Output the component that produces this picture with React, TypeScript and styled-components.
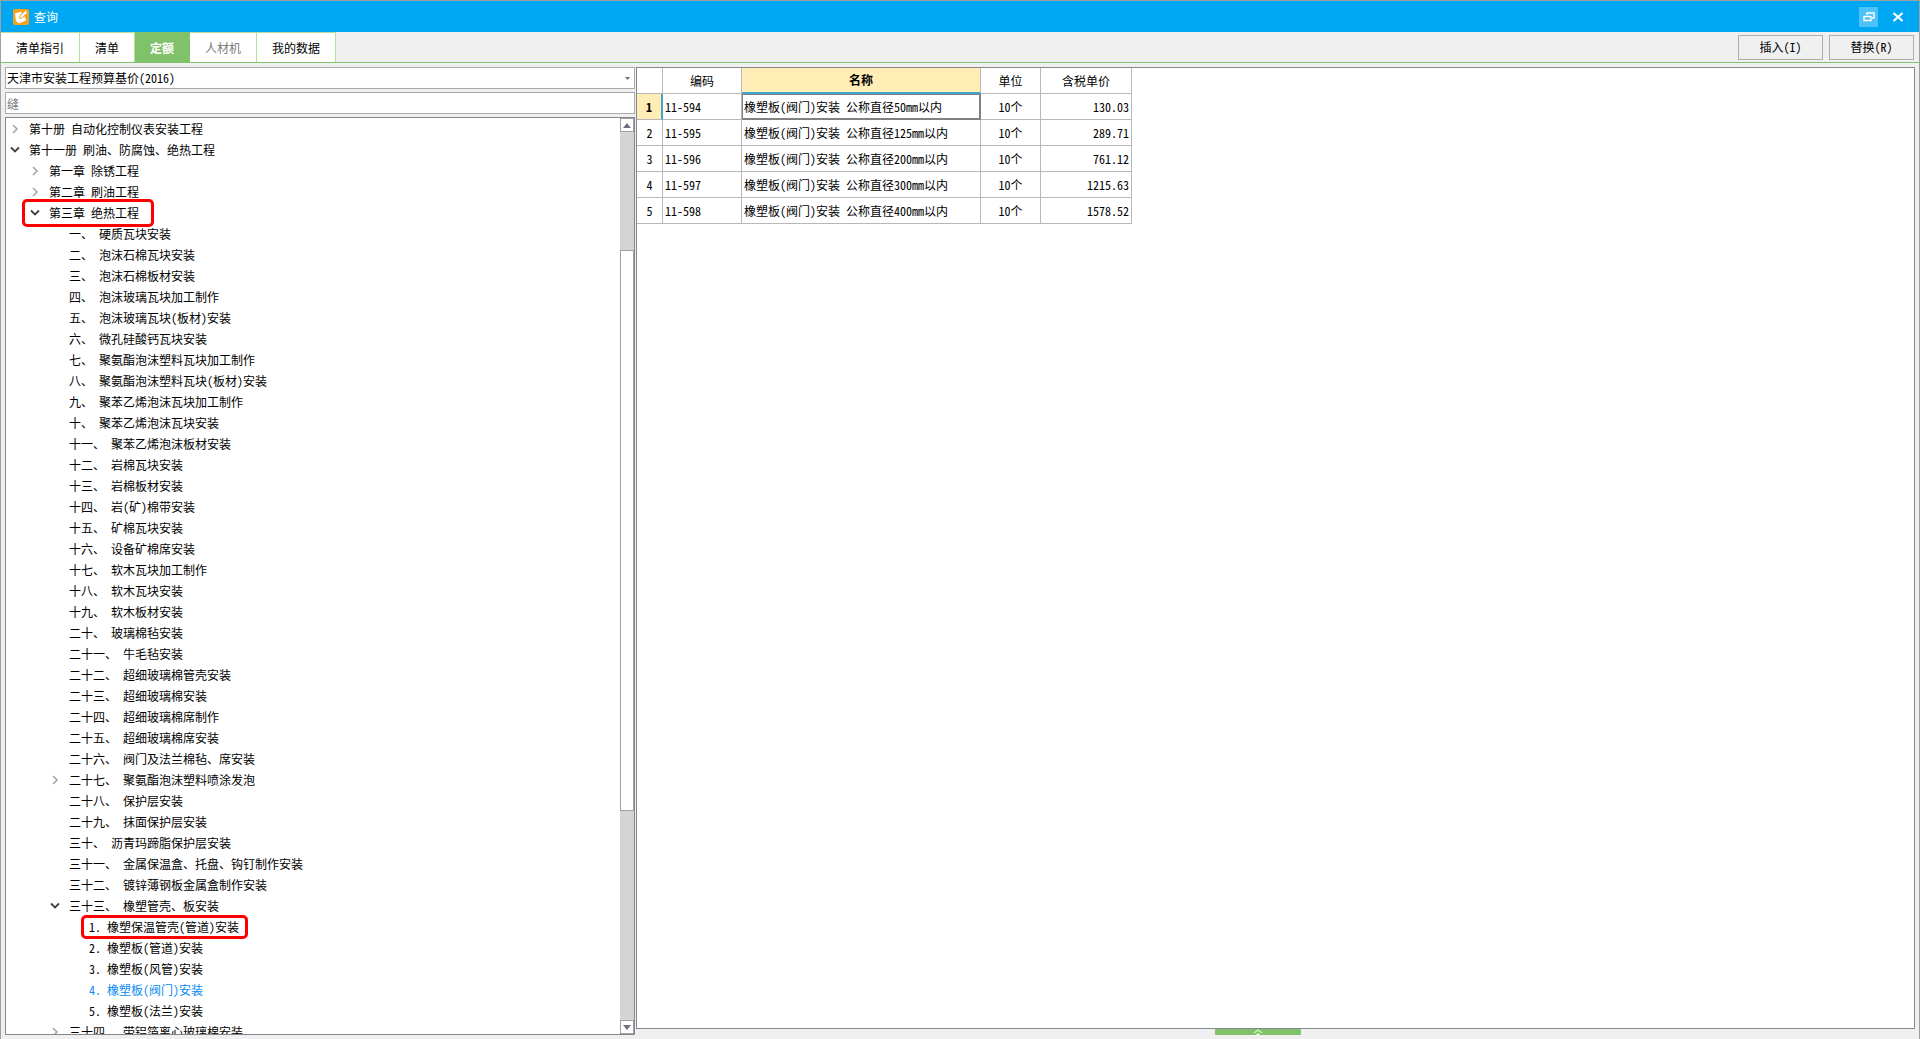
import React, { useState } from "react";
import styled, { createGlobalStyle, css } from "styled-components";

const GlobalStyle = createGlobalStyle`
  *, *::before, *::after { box-sizing: border-box; }
  html, body, #root { height: 100%; }
  body { margin: 0; background: #f0f0f0; }
  body, button, input, select {
    font-family: "Noto Sans CJK SC", "Noto Sans", sans-serif;
    font-size: 12px;
    font-feature-settings: "hwid";
    color: #000;
  }
  button { padding: 0; border: 0; background: none; white-space: nowrap; }
`;

const Window = styled.div`
  display: flex;
  flex-direction: column;
  height: 100vh;
  border: 1px solid #a0a0a0;
  border-bottom: 0;
  background: #f0f0f0;
`;

const TitleBar = styled.header`
  flex: none;
  display: flex;
  align-items: center;
  gap: 5px;
  height: 31px;
  padding: 0 12px;
  background: #00a8f3;
  color: #fff;
`;

const Title = styled.h1`
  flex: 1;
  margin: 0;
  font-size: 12px;
  font-weight: 400;
  line-height: 16px;
`;

const WindowButton = styled.button<{ $lit?: boolean }>`
  display: grid;
  place-items: center;
  width: 19px;
  height: 20px;
  margin-left: 5px;
  background: ${(p) => (p.$lit ? "#4cc2f8" : "none")};
`;

const TabBar = styled.div`
  flex: none;
  display: flex;
  height: 31px;
  border-bottom: 1px solid #80c269;
`;

const Tabs = styled.nav`
  flex: 1;
  display: flex;
`;

const Tab = styled.button<{ $active?: boolean; $muted?: boolean }>`
  padding: 0 15px;
  border-top: 1px solid #b4e09f;
  border-right: 1px solid #b4e09f;
  background: #fff;
  line-height: 28px;
  color: ${(p) => (p.$muted ? "#7a7a7a" : "#000")};
  ${(p) =>
    p.$active &&
    css`
      border-color: #80c269;
      background: #80c269;
      color: #fff;
      font-weight: 700;
    `}
`;

const Actions = styled.div`
  display: flex;
  align-items: center;
  gap: 6px;
  padding: 0 5px;
`;

const ActionButton = styled.button`
  width: 85px;
  height: 25px;
  border: 1px solid #adadad;
  line-height: 22px;
`;

const Body = styled.main`
  flex: 1;
  display: grid;
  grid-template-columns: minmax(0, 630fr) minmax(0, 1279fr);
  gap: 1px;
  min-height: 0;
  padding: 4px 4px 4px 4px;
`;

const Side = styled.section`
  display: flex;
  flex-direction: column;
  gap: 3px;
  min-height: 0;
`;

const Picker = styled.div`
  flex: none;
  display: grid;
  height: 22px;
  border: 1px solid #ababab;
  background: #fff;
  > * { grid-area: 1 / 1; }
  > svg { place-self: center end; margin-right: 4px; pointer-events: none; }
`;

const Library = styled.select`
  width: 100%;
  padding: 0 1px;
  border: 0;
  background: none;
  appearance: none;
  line-height: 18px;
`;

const Search = styled.input`
  flex: none;
  height: 22px;
  padding: 0 1px;
  border: 1px solid #ababab;
  background: #fff;
  &::placeholder { color: #7f7f7f; opacity: 1; }
`;

const TreeFrame = styled.div`
  flex: 1;
  display: flex;
  min-height: 0;
  border: 1px solid #828790;
  background: #fff;
`;

const Tree = styled.ul`
  flex: 1;
  margin: 0;
  padding: 0;
  overflow: hidden;
  list-style: none;
`;

const Node = styled.li<{ $depth: number }>`
  display: flex;
  align-items: center;
  height: 21px;
  padding-left: ${(p) => p.$depth * 20}px;
`;

const Toggle = styled.button`
  flex: none;
  display: grid;
  place-items: center;
  width: 18px;
  height: 20px;
`;

const Spacer = styled.span`
  flex: none;
  width: 18px;
`;

const Label = styled.button<{ $selected: boolean; $mark?: "chapter" | "item" }>`
  position: relative;
  margin-left: 5px;
  line-height: 20px;
  white-space: pre;
  color: ${(p) => (p.$selected ? "#0a8cf5" : "#000")};
  ${(p) =>
    p.$mark &&
    css`
      &::after {
        content: "";
        position: absolute;
        inset: ${p.$mark === "chapter" ? "-4px -15px -4px -27px" : "-2px -9px -2px -8px"};
        border: 3px solid #f00;
        border-radius: 5px;
        pointer-events: none;
      }
    `}
`;

const ScrollBar = styled.div`
  flex: none;
  display: flex;
  flex-direction: column;
  width: 14px;
  background: #d4d4d4;
`;

const ScrollButton = styled.button`
  flex: none;
  display: grid;
  place-items: center;
  height: 14px;
  border: 1px solid #a0a0a0;
  background: #fff;
`;

const Track = styled.div<{ $share: number }>`
  flex: ${(p) => p.$share} 1 0;
`;

const Thumb = styled(Track)`
  border: 1px solid #a0a0a0;
  background: #fff;
`;

const Main = styled.section`
  display: flex;
  flex-direction: column;
  min-height: 0;
`;

const Sheet = styled.div`
  flex: 1;
  min-height: 0;
  overflow: hidden;
  border: 1px solid #828790;
  background: #fff;
`;

const Drawer = styled.button`
  flex: none;
  display: grid;
  place-items: start center;
  width: 86px;
  height: 6px;
  margin-left: 579px;
  background: #80c269;
`;

const Table = styled.table`
  border-collapse: separate;
  border-spacing: 0;
  table-layout: fixed;
  width: 495px;
`;

const Cell = styled.td<{ $align?: string; $current?: boolean }>`
  height: 26px;
  padding: 0 2px;
  border-right: 1px solid #b8b8b8;
  border-bottom: 1px solid #b8b8b8;
  line-height: 18px;
  text-align: ${(p) => p.$align ?? "left"};
  white-space: nowrap;
  ${(p) => p.$current && "box-shadow: inset 0 0 0 1px #808080; border-color: #808080;"}
`;

const HeadCell = styled(Cell)<{ $lit?: boolean }>`
  font-weight: ${(p) => (p.$lit ? 700 : 400)};
  ${(p) => p.$lit && "background: #ffedb5; border-bottom: 2px solid #3ba7d0;"}
`;

const RowHead = styled(Cell)<{ $lit?: boolean }>`
  font-weight: ${(p) => (p.$lit ? 700 : 400)};
  ${(p) => p.$lit && "background: #ffedb5; border-right: 2px solid #3ba7d0;"}
`;

type Item = { depth: number; text: string; open?: boolean; mark?: "chapter" | "item" };

const sections = [
  "一、 硬质瓦块安装",
  "二、 泡沫石棉瓦块安装",
  "三、 泡沫石棉板材安装",
  "四、 泡沫玻璃瓦块加工制作",
  "五、 泡沫玻璃瓦块(板材)安装",
  "六、 微孔硅酸钙瓦块安装",
  "七、 聚氨酯泡沫塑料瓦块加工制作",
  "八、 聚氨酯泡沫塑料瓦块(板材)安装",
  "九、 聚苯乙烯泡沫瓦块加工制作",
  "十、 聚苯乙烯泡沫瓦块安装",
  "十一、 聚苯乙烯泡沫板材安装",
  "十二、 岩棉瓦块安装",
  "十三、 岩棉板材安装",
  "十四、 岩(矿)棉带安装",
  "十五、 矿棉瓦块安装",
  "十六、 设备矿棉席安装",
  "十七、 软木瓦块加工制作",
  "十八、 软木瓦块安装",
  "十九、 软木板材安装",
  "二十、 玻璃棉毡安装",
  "二十一、 牛毛毡安装",
  "二十二、 超细玻璃棉管壳安装",
  "二十三、 超细玻璃棉安装",
  "二十四、 超细玻璃棉席制作",
  "二十五、 超细玻璃棉席安装",
  "二十六、 阀门及法兰棉毡、席安装",
];

const items: Item[] = [
  { depth: 0, text: "第十册 自动化控制仪表安装工程", open: false },
  { depth: 0, text: "第十一册 刷油、防腐蚀、绝热工程", open: true },
  { depth: 1, text: "第一章 除锈工程", open: false },
  { depth: 1, text: "第二章 刷油工程", open: false },
  { depth: 1, text: "第三章 绝热工程", open: true, mark: "chapter" },
  ...sections.map((text) => ({ depth: 2, text })),
  { depth: 2, text: "二十七、 聚氨酯泡沫塑料喷涂发泡", open: false },
  { depth: 2, text: "二十八、 保护层安装" },
  { depth: 2, text: "二十九、 抹面保护层安装" },
  { depth: 2, text: "三十、 沥青玛蹄脂保护层安装" },
  { depth: 2, text: "三十一、 金属保温盒、托盘、钩钉制作安装" },
  { depth: 2, text: "三十二、 镀锌薄钢板金属盒制作安装" },
  { depth: 2, text: "三十三、 橡塑管壳、板安装", open: true },
  { depth: 3, text: "1. 橡塑保温管壳(管道)安装", mark: "item" },
  { depth: 3, text: "2. 橡塑板(管道)安装" },
  { depth: 3, text: "3. 橡塑板(风管)安装" },
  { depth: 3, text: "4. 橡塑板(阀门)安装" },
  { depth: 3, text: "5. 橡塑板(法兰)安装" },
  { depth: 2, text: "三十四、 带铝箔离心玻璃棉安装", open: false },
];

const quotas = [
  { code: "11-594", size: "50", price: "130.03" },
  { code: "11-595", size: "125", price: "289.71" },
  { code: "11-596", size: "200", price: "761.12" },
  { code: "11-597", size: "300", price: "1215.63" },
  { code: "11-598", size: "400", price: "1578.52" },
];

const tabs = ["清单指引", "清单", "定额", "人材机", "我的数据"];

function AppLogo() {
  return (
    <svg width="16" height="16" viewBox="0 0 16 16" aria-hidden="true">
      <rect width="16" height="16" rx="2" fill="#f9a11b" />
      <path d="M2 4.5 8 2.5 9 4 6 7.5 7.5 9.5 12 7.5 13 11.5 6 14.5 3 12Z" fill="#fff" />
      <path d="M6.5 9.5 7 7 12.5 1.5 14.5 3.5 9 9Z" fill="#fff" stroke="#f9a11b" strokeWidth="0.8" />
    </svg>
  );
}

function Chevron({ open }: { open: boolean }) {
  return open ? (
    <svg width="10" height="10" viewBox="0 0 10 10" aria-hidden="true">
      <path d="M1 2.5 5 6.5 9 2.5" fill="none" stroke="#404040" strokeWidth="1.8" />
    </svg>
  ) : (
    <svg width="10" height="10" viewBox="0 0 10 10" aria-hidden="true">
      <path d="M3 1 7 5 3 9" fill="none" stroke="#a6a6a6" strokeWidth="1.6" />
    </svg>
  );
}

export default function App() {
  const [tab, setTab] = useState("定额");
  const [selected, setSelected] = useState("4. 橡塑板(阀门)安装");

  return (
    <>
      <GlobalStyle />
      <Window>
        <TitleBar>
          <AppLogo />
          <Title>查询</Title>
          <WindowButton $lit aria-label="还原">
            <svg width="12" height="10" viewBox="0 0 12 10" aria-hidden="true">
              <path d="M4 3V1H11V6H9M1 4.5H8M1 4V8.5H8V4" fill="none" stroke="#fff" strokeWidth="1.4" />
            </svg>
          </WindowButton>
          <WindowButton aria-label="关闭">
            <svg width="12" height="10" viewBox="0 0 12 10" aria-hidden="true">
              <path d="M1.5 1 10.5 9M10.5 1 1.5 9" stroke="#fff" strokeWidth="2.2" />
            </svg>
          </WindowButton>
        </TitleBar>
        <TabBar>
          <Tabs>
            {tabs.map((name) => (
              <Tab key={name} $active={name === tab} $muted={name === "人材机"} onClick={() => setTab(name)}>
                {name}
              </Tab>
            ))}
          </Tabs>
          <Actions>
            <ActionButton>插入(I)</ActionButton>
            <ActionButton>替换(R)</ActionButton>
          </Actions>
        </TabBar>
        <Body>
          <Side>
            <Picker>
              <Library aria-label="定额库">
                <option>天津市安装工程预算基价(2016)</option>
              </Library>
              <svg width="5" height="3" viewBox="0 0 5 3" aria-hidden="true">
                <path d="M0 0H5L2.5 3Z" fill="#6d6f7f" />
              </svg>
            </Picker>
            <Search aria-label="搜索" placeholder="缝" />
            <TreeFrame>
              <Tree>
                {items.map((item) => (
                  <Node key={item.text} $depth={item.depth}>
                    {item.open === undefined ? (
                      <Spacer />
                    ) : (
                      <Toggle aria-label={item.open ? "折叠" : "展开"}>
                        <Chevron open={item.open} />
                      </Toggle>
                    )}
                    <Label
                      $selected={item.text === selected}
                      $mark={item.mark}
                      onClick={() => setSelected(item.text)}
                    >
                      {item.text}
                    </Label>
                  </Node>
                ))}
              </Tree>
              <ScrollBar>
                <ScrollButton aria-label="向上">
                  <svg width="8" height="5" viewBox="0 0 8 5" aria-hidden="true">
                    <path d="M0 5H8L4 0Z" fill="#6d6f7f" />
                  </svg>
                </ScrollButton>
                <Track $share={118} />
                <Thumb $share={561} />
                <Track $share={209} />
                <ScrollButton aria-label="向下">
                  <svg width="8" height="5" viewBox="0 0 8 5" aria-hidden="true">
                    <path d="M0 0H8L4 5Z" fill="#6d6f7f" />
                  </svg>
                </ScrollButton>
              </ScrollBar>
            </TreeFrame>
          </Side>
          <Main>
            <Sheet>
              <Table>
                <colgroup>
                  <col style={{ width: 26 }} />
                  <col style={{ width: 79 }} />
                  <col style={{ width: 239 }} />
                  <col style={{ width: 60 }} />
                  <col style={{ width: 91 }} />
                </colgroup>
                <thead>
                  <tr>
                    <HeadCell />
                    <HeadCell as="th" $align="center">编码</HeadCell>
                    <HeadCell as="th" $align="center" $lit>名称</HeadCell>
                    <HeadCell as="th" $align="center">单位</HeadCell>
                    <HeadCell as="th" $align="center">含税单价</HeadCell>
                  </tr>
                </thead>
                <tbody>
                  {quotas.map((q, i) => (
                    <tr key={q.code}>
                      <RowHead as="th" $align="center" $lit={i === 0}>{i + 1}</RowHead>
                      <Cell>{q.code}</Cell>
                      <Cell $current={i === 0}>{`橡塑板(阀门)安装 公称直径${q.size}mm以内`}</Cell>
                      <Cell $align="center">10个</Cell>
                      <Cell $align="right">{q.price}</Cell>
                    </tr>
                  ))}
                </tbody>
              </Table>
            </Sheet>
            <Drawer aria-label="展开明细">
              <svg width="10" height="6" viewBox="0 0 10 6" aria-hidden="true">
                <path d="M1 4 5 1 9 4" fill="none" stroke="#d9efd0" strokeWidth="1.4" />
                <path d="M3 6 5 4 7 6Z" fill="#fff" />
              </svg>
            </Drawer>
          </Main>
        </Body>
      </Window>
    </>
  );
}
